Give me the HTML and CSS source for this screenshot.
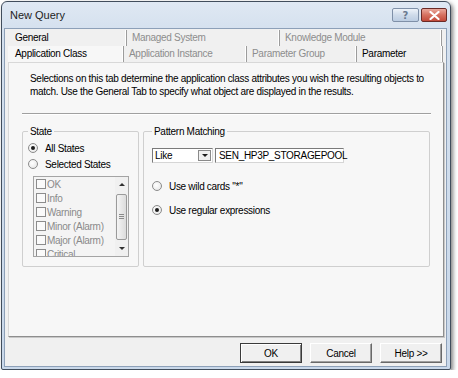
FILE: index.html
```html
<!DOCTYPE html>
<html lang="en">

<head>
  <meta charset="UTF-8">
  <title>New Query</title>
  <link rel="stylesheet" href="styles.css">
</head>

<body>
  <div class="window">
    <div class="titlebar">
      <span class="title">New Query</span>
      <div class="caption-buttons">
        <span class="cbtn help">?</span>
        <span class="cbtn close">
          <svg width="11" height="9" viewBox="0 0 11 9">
            <path d="M1.5 1 L9.5 8 M9.5 1 L1.5 8" stroke="#fff" stroke-width="2.2" stroke-linecap="round" />
          </svg>
        </span>
      </div>
    </div>

    <div class="client">
      <div class="tabs">
        <div class="tab-row back">
          <div class="tab t-general">General</div>
          <div class="tab t-managed off">Managed System</div>
          <div class="tab t-knowledge off">Knowledge Module</div>
        </div>
        <div class="tab-row front">
          <div class="tab t-appclass selected">Application Class</div>
          <div class="tab t-appinst off">Application Instance</div>
          <div class="tab t-pgroup off">Parameter Group</div>
          <div class="tab t-param">Parameter</div>
        </div>
      </div>

      <div class="panel">
        <p class="intro">Selections on this tab determine the application class attributes you wish the resulting objects to<br>
          match. Use the General Tab to specify what object are displayed in the results.</p>
        <div class="separator"></div>

        <div class="groups">
          <fieldset class="group state">
            <legend>State</legend>
            <label class="option"><span class="radio on"></span>All States</label>
            <label class="option"><span class="radio"></span>Selected States</label>
            <div class="listbox">
              <ul class="items">
                <li><span class="check"></span>OK</li>
                <li><span class="check"></span>Info</li>
                <li><span class="check"></span>Warning</li>
                <li><span class="check"></span>Minor (Alarm)</li>
                <li><span class="check"></span>Major (Alarm)</li>
                <li><span class="check"></span>Critical</li>
              </ul>
              <div class="scrollbar">
                <span class="arrow up"></span>
                <span class="track"><span class="thumb"><span class="grip"></span></span></span>
                <span class="arrow down"></span>
              </div>
            </div>
          </fieldset>

          <fieldset class="group pattern">
            <legend>Pattern Matching</legend>
            <div class="inputs">
              <div class="combo">
                <span class="combo-value">Like</span>
                <span class="combo-btn"></span>
              </div>
              <div class="textbox">SEN_HP3P_STORAGEPOOL<span class="caret"></span></div>
            </div>
            <label class="option wild"><span class="radio"></span>Use wild cards "*"</label>
            <label class="option regex"><span class="radio on"></span>Use regular expressions</label>
          </fieldset>
        </div>
      </div>

      <div class="buttons">
        <button class="btn default">OK</button>
        <button class="btn">Cancel</button>
        <button class="btn">Help &gt;&gt;</button>
      </div>
    </div>
  </div>
</body>

</html>
```

FILE: styles.css
```css
html,
body {
  margin: 0;
  padding: 0;
  background: #ffffff;
  font-family: "Liberation Sans", Arial, sans-serif;
  font-size: 10px;
  letter-spacing: -0.3px;
  color: #000;
}

.window {
  box-sizing: border-box;
  width: 450px;
  height: 369px;
  margin: 1px 0 0 1px;
  border: 1px solid #414d5c;
  border-radius: 6px 6px 2px 2px;
  background: linear-gradient(#dfe8f3, #d4e0ee 30px, #c9d8ea);
  box-shadow: 2px 2px 4px rgba(0, 0, 0, 0.5);
  padding: 0 3px 2px 2px;
  display: flex;
  flex-direction: column;
}

/* title bar */
.titlebar {
  height: 26px;
  display: flex;
  align-items: center;
  justify-content: space-between;
  padding: 0 0 0 6px;
}

.title {
  font-size: 11px;
  letter-spacing: 0;
  color: #1e1e1e;
  margin-top: -1px;
}

.caption-buttons {
  display: flex;
  gap: 2px;
  align-self: flex-start;
  margin-top: 6px;
}

.cbtn {
  box-sizing: border-box;
  height: 14px;
  display: flex;
  align-items: center;
  justify-content: center;
  border: 1px solid #7f90a8;
  border-radius: 2px;
}

.cbtn.help {
  width: 27px;
  background: linear-gradient(#eef3f9, #cfdbea 50%, #bccde2);
  color: #6a7a90;
  font-family: "DejaVu Sans", sans-serif;
  font-weight: bold;
  font-size: 10px;
  letter-spacing: 0;
}

.cbtn.close {
  width: 26px;
  border-color: #6b2a26;
  background: linear-gradient(#eaa99c, #d6705f 50%, #c24a3a);
}

/* client area */
.client {
  flex: 1;
  background: #f0f0f0;
  border: 1px solid #8da0b8;
  display: flex;
  flex-direction: column;
}

.tabs {
  margin-top: 1px;
}

.tab-row {
  display: flex;
  height: 16px;
}

.tab-row.back {
  padding-left: 5px;
}

.tab-row.front {
  padding-left: 3px;
}

.tab {
  box-sizing: border-box;
  height: 16px;
  line-height: 16px;
  padding-left: 5px;
  border-right: 1px solid #9c9c9c;
  box-shadow: inset -2px 0 0 -1px #ffffff;
  white-space: nowrap;
}

.tab.off {
  color: #8d8d8d;
}

.tab.selected {
  padding-left: 7px;
  background: #f7f7f7;
}

.t-general { width: 117px; }
.t-managed { width: 153px; }
.t-knowledge { width: 162px; }
.t-appclass { width: 116px; }
.t-appinst { width: 123px; }
.t-pgroup { width: 110px; }
.t-param { width: 86px; }

/* tab page */
.panel {
  box-sizing: border-box;
  width: 436px;
  height: 275px;
  margin-left: 3px;
  background: #f7f7f7;
  border: 1px solid #d8d8d8;
  border-right-color: #8e8e8e;
  border-bottom-color: #8e8e8e;
  box-shadow: 1px 1px 0 #c8c8c8;
  padding: 9px 12px 0 13px;
}

.intro {
  margin: 0 0 0 8px;
  line-height: 13px;
  white-space: nowrap;
}

.separator {
  margin-top: 15px;
  height: 1px;
  background: #a0a0a0;
  border-bottom: 1px solid #ffffff;
}

.groups {
  display: flex;
  gap: 4px;
  margin-top: 10px;
}

.group {
  box-sizing: border-box;
  height: 142px;
  margin: 0;
  border: 1px solid #cfcfcf;
  border-radius: 2px;
  padding: 0 8px;
  min-width: 0;
}

.group legend {
  padding: 0 2px;
  line-height: 13px;
}

.group.state {
  width: 117px;
  padding-left: 5px;
}

.group.pattern {
  width: 287px;
}

.option {
  display: flex;
  align-items: center;
  height: 16px;
  white-space: nowrap;
}

.radio {
  box-sizing: border-box;
  width: 10px;
  height: 10px;
  border-radius: 50%;
  border: 1px solid #8b8b8b;
  background: radial-gradient(circle at 40% 40%, #ffffff, #e2e2e2);
  margin-right: 7px;
  display: inline-flex;
  align-items: center;
  justify-content: center;
}

.radio.on::after {
  content: "";
  width: 4px;
  height: 4px;
  border-radius: 50%;
  background: #1c1c1c;
}

.state .option:first-of-type {
  margin-top: 2px;
}

/* state list */
.listbox {
  box-sizing: border-box;
  width: 96px;
  height: 81px;
  margin: 4px 0 0 5px;
  border: 1px solid #a4a4a4;
  background: #f4f4f4;
  display: flex;
  overflow: hidden;
}

.items {
  list-style: none;
  margin: 0;
  padding: 0;
  flex: 1;
  color: #8a8a8a;
}

.items li {
  display: flex;
  align-items: center;
  height: 14px;
  white-space: nowrap;
}

.check {
  box-sizing: border-box;
  width: 10px;
  height: 10px;
  border: 1px solid #8c8c8c;
  background: #fafafa;
  margin: 0 1px 0 2px;
}

.scrollbar {
  width: 13px;
  display: flex;
  flex-direction: column;
  background: #f0f0f0;
}

.arrow {
  height: 16px;
  display: flex;
  align-items: center;
  justify-content: center;
}

.arrow::after {
  content: "";
  border-left: 3px solid transparent;
  border-right: 3px solid transparent;
}

.arrow.up::after {
  border-bottom: 3px solid #303030;
}

.arrow.down::after {
  border-top: 3px solid #303030;
}

.track {
  flex: 1;
  padding: 1px 0;
  display: flex;
  flex-direction: column;
}

.thumb {
  box-sizing: border-box;
  height: 46px;
  margin: 0 1px;
  border: 1px solid #9a9a9a;
  border-radius: 2px;
  background: linear-gradient(90deg, #f4f4f4, #dcdcdc);
  display: flex;
  align-items: center;
  justify-content: center;
}

.grip {
  width: 5px;
  height: 5px;
  border-top: 1px solid #8a8a8a;
  border-bottom: 1px solid #8a8a8a;
  box-sizing: border-box;
}

.grip::after {
  content: "";
  display: block;
  height: 1px;
  margin-top: 1px;
  background: #8a8a8a;
}

/* pattern group */
.inputs {
  display: flex;
  gap: 2px;
  margin-top: 10px;
}

.combo {
  box-sizing: border-box;
  width: 61px;
  height: 15px;
  background: #ffffff;
  border: 1px solid #7a7a7a;
  border-right-color: #d6d6d6;
  border-bottom-color: #d6d6d6;
  display: flex;
  align-items: center;
  padding-left: 2px;
}

.combo-value {
  flex: 1;
}

.combo-btn {
  box-sizing: border-box;
  width: 13px;
  height: 11px;
  margin-right: 1px;
  background: #f0f0f0;
  border: 1px solid #8a8a8a;
  display: flex;
  align-items: center;
  justify-content: center;
}

.combo-btn::after {
  content: "";
  border-left: 3px solid transparent;
  border-right: 3px solid transparent;
  border-top: 3px solid #1c1c1c;
}

.textbox {
  box-sizing: border-box;
  width: 129px;
  height: 15px;
  line-height: 13px;
  background: #ffffff;
  border: 1px solid #7a7a7a;
  border-right-color: #d6d6d6;
  border-bottom-color: #d6d6d6;
  padding-left: 3px;
  white-space: nowrap;
  display: flex;
  align-items: center;
}

.caret {
  width: 1px;
  height: 11px;
  background: #000;
}

.option.wild {
  margin-top: 15px;
}

.option.regex {
  margin-top: 8px;
}

/* dialog buttons */
.buttons {
  display: flex;
  justify-content: flex-end;
  gap: 8px;
  padding: 6px 4px 0 0;
}

.btn {
  box-sizing: border-box;
  width: 62px;
  height: 20px;
  padding: 0;
  font: inherit;
  letter-spacing: -0.3px;
  color: #000;
  background: #f0f0f0;
  border: 1px solid;
  border-color: #ffffff #696969 #696969 #ffffff;
  box-shadow: inset -1px -1px 0 #a0a0a0;
}

.btn.default {
  border: 1px solid #3a3a3a;
  box-shadow: inset 1px 1px 0 #ffffff, inset -1px -1px 0 #808080;
}
```
